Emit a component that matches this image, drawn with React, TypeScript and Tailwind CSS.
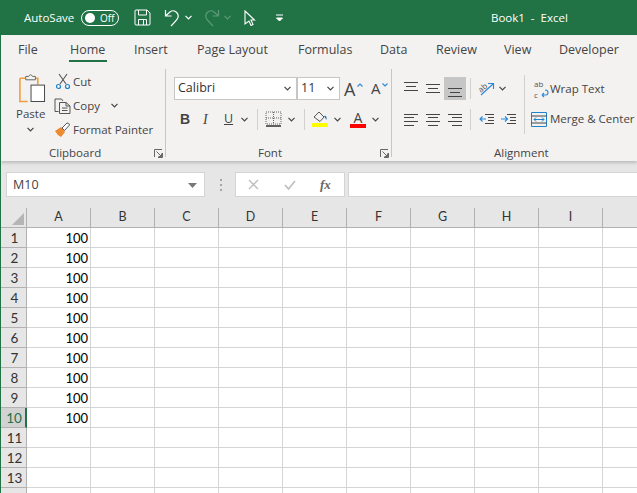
import { ReactNode } from 'react'

const UI_FONT = 'font-["Open_Sans","Liberation_Sans",sans-serif]'

const tabs = [
  { label: 'File', className: 'ml-[17px] w-[52px]' },
  { label: 'Home', className: 'w-[64px] text-[#222] font-medium' },
  { label: 'Insert', className: 'w-[63px]' },
  { label: 'Page Layout', className: 'w-[101px]' },
  { label: 'Formulas', className: 'w-[82px]' },
  { label: 'Data', className: 'w-[56px]' },
  { label: 'Review', className: 'w-[68px]' },
  { label: 'View', className: 'w-[55px]' },
  { label: 'Developer', className: 'w-[70px]' },
]

const columns = [
  { label: 'A', className: 'w-[64px]' },
  { label: 'B', className: 'w-[64px]' },
  { label: 'C', className: 'w-[64px]' },
  { label: 'D', className: 'w-[64px]' },
  { label: 'E', className: 'w-[64px]' },
  { label: 'F', className: 'w-[64px]' },
  { label: 'G', className: 'w-[64px]' },
  { label: 'H', className: 'w-[64px]' },
  { label: 'I', className: 'w-[64px]' },
  { label: '', className: 'w-[35px]' },
]

const rows = [1, 2, 3, 4, 5, 6, 7, 8, 9, 10, 11, 12, 13, 14]

function Chevron({ className = '', color = '#444' }: { className?: string; color?: string }) {
  return (
    <svg width="7" height="5" viewBox="0 0 7 5" className={`shrink-0 ${className}`}>
      <path d="M0.5 0.8 L3.5 3.8 L6.5 0.8" fill="none" stroke={color} strokeWidth="1.2" />
    </svg>
  )
}

function Launcher() {
  return (
    <svg width="9" height="9" viewBox="0 0 9 9" className="shrink-0">
      <path d="M0.5 8 V0.5 H8 M8.5 4 V8.5 H4 M2.5 2.5 L7.5 7.5 M7.5 4.5 V7.5 H4.5" fill="none" stroke="#666" strokeWidth="1" />
    </svg>
  )
}

// horizontal text-alignment style icon, each line is [x1, x2, y]
function Lines({ lines, color = '#444' }: { lines: number[][]; color?: string }) {
  return (
    <svg width="15" height="14" viewBox="0 0 15 14" className="shrink-0 overflow-visible">
      {lines.map(([a, b, y], i) => (
        <path key={i} d={`M${a} ${y + 0.5} H${b}`} stroke={color} strokeWidth="1" />
      ))}
    </svg>
  )
}

function Sep({ className = '' }: { className?: string }) {
  return <div className={`w-px bg-[#d2d0ce] shrink-0 ${className}`} />
}

function Group({ label, className, labelClass, launcher, children }: { label: string; className: string; labelClass: string; launcher?: boolean; children: ReactNode }) {
  return (
    <div className={`relative h-[88px] border-r border-[#c8c6c4] shrink-0 ${className}`}>
      {children}
      <div className={`absolute top-[76px] text-[11.5px] leading-[16px] text-[#444] ${labelClass}`}>{label}</div>
      {launcher && (
        <div className="absolute top-[80px] right-[2px]">
          <Launcher />
        </div>
      )}
    </div>
  )
}

function TitleBar() {
  return (
    <div className="h-[35px] bg-[#217346] flex items-center text-white shrink-0">
      <span className="ml-[23px] w-[57px] text-[11.5px]">AutoSave</span>
      <div className="w-[38px] h-[16px] rounded-full border border-white flex items-center pl-[3px]">
        <span className="w-[10px] h-[10px] rounded-full bg-white" />
        <span className="ml-[5px] text-[10px] leading-none">Off</span>
      </div>
      <svg width="17" height="17" viewBox="0 0 17 17" className="ml-[15px]">
        <path d="M1 2 Q1 1 2 1 H13 L16 4 V15 Q16 16 15 16 H2 Q1 16 1 15 Z M4.5 1 V6 H12.5 V1 M4.5 16 V10.5 H12.5 V16 M9.5 11 V16" fill="none" stroke="#fff" strokeWidth="1" />
      </svg>
      <svg width="16" height="18" viewBox="0 0 16 18" className="ml-[13px]">
        <path d="M1.5 1 V7 H7.5 M1.5 7 L6.5 2.5 Q9 1 11.5 2.5 Q15 5 14 8.5 Q13 11 7 17" fill="none" stroke="#fff" strokeWidth="1.2" />
      </svg>
      <Chevron color="#fff" className="ml-[5px]" />
      <svg width="16" height="18" viewBox="0 0 16 18" className="ml-[12px]">
        <path d="M14.5 1 V7 H8.5 M14.5 7 L9.5 2.5 Q7 1 4.5 2.5 Q1 5 2 8.5 Q3 11 9 17" fill="none" stroke="#5b9b7a" strokeWidth="1.2" />
      </svg>
      <Chevron color="#5b9b7a" className="ml-[4px]" />
      <svg width="12" height="16" viewBox="0 0 12 16" className="ml-[13px]">
        <path d="M1 1 L10.5 10 H7 L9 14.5 L7 15.5 L5 11 L1 14 Z" fill="none" stroke="#fff" strokeWidth="1.1" />
      </svg>
      <svg width="9" height="8" viewBox="0 0 9 8" className="ml-[19px]">
        <path d="M1 1 H8 M1.5 4 L4.5 7 L7.5 4 Z" fill="#fff" stroke="#fff" strokeWidth="1" />
      </svg>
      <span className="ml-[207px] text-[11.5px] whitespace-pre">Book1  -  Excel</span>
    </div>
  )
}

function TabStrip() {
  return (
    <div className="h-[30px] flex items-center shrink-0">
      {tabs.map((t) => (
        <div key={t.label} className={`relative h-full flex items-center shrink-0 pt-[1px] text-[12.5px] text-[#444] ${t.className}`}>
          {t.label}
          {t.label === 'Home' && <div className="absolute left-[-1px] top-[25px] w-[38px] h-[2px] bg-[#217346]" />}
        </div>
      ))}
    </div>
  )
}

function Clipboard() {
  return (
    <Group label="Clipboard" className="w-[165px]" labelClass="left-[48px]" launcher>
      <div className="flex">
        <div className="w-[52px] pl-[17px] pt-[4px] flex flex-col">
          <svg width="28" height="30" viewBox="0 0 29 31">
            <path d="M2 5.5 H8 M18 5.5 H20.5 V12 M10 29.5 H2 V5.5" fill="none" stroke="#ed9c3f" strokeWidth="1.6" />
            <path d="M8 6 V3.5 H11 Q13 0 15 3.5 H18 V7 H8 Z" fill="#f3f2f1" stroke="#666" strokeWidth="1" />
            <rect x="13.5" y="12.5" width="14" height="17" fill="#fff" stroke="#444" strokeWidth="1" />
          </svg>
          <span className="mt-[2px] -ml-[2px] text-[11.5px] leading-[17px] text-[#444]">Paste</span>
          <Chevron className="mt-[5px] ml-[9px]" />
        </div>
        <div className="flex flex-col pt-[4px] text-[11.5px] text-[#444]">
          <div className="h-[17px] flex items-center">
            <svg width="16" height="17" viewBox="0 0 16 17" className="ml-[2px]">
              <path d="M4 1 L11 11 M12 1 L5 11" fill="none" stroke="#555" strokeWidth="1.1" />
              <circle cx="3.5" cy="13.5" r="2" fill="none" stroke="#1e83c9" strokeWidth="1.2" />
              <circle cx="12.5" cy="13.5" r="2" fill="none" stroke="#1e83c9" strokeWidth="1.2" />
            </svg>
            <span className="ml-[2px]">Cut</span>
          </div>
          <div className="h-[17px] mt-[7px] flex items-center">
            <svg width="17" height="16" viewBox="0 0 17 16" className="ml-[1px]">
              <path d="M4.5 13.5 H1 V1 H7.5 L9 3" fill="none" stroke="#555" strokeWidth="1" />
              <path d="M5.5 4.5 H12 L16 8 V15.5 H5.5 Z M12 4.5 V8 H16 M8 10 H13.5 M8 12.5 H13.5" fill="none" stroke="#555" strokeWidth="1" />
            </svg>
            <span className="ml-[2px]">Copy</span>
            <Chevron className="ml-[11px]" />
          </div>
          <div className="h-[17px] mt-[7px] flex items-center whitespace-nowrap">
            <svg width="17" height="16" viewBox="0 0 17 16" className="ml-[1px]">
              <path d="M1 9 L7 5 L11 10 L7 15 Q3 13 1 9 Z" fill="#ed8a2e" />
              <path d="M8 6 L13 1 Q15 0.5 15.5 3 L10.5 8.5 Z" fill="#fff" stroke="#555" strokeWidth="1" />
            </svg>
            <span className="ml-[2px]">Format Painter</span>
          </div>
        </div>
      </div>
    </Group>
  )
}

function Font() {
  return (
    <Group label="Font" className="w-[226px]" labelClass="left-[92px]" launcher>
      <div className="flex items-center pt-[8px] pl-[8px]">
        <div className="w-[123px] h-[23px] bg-white border border-[#c8c6c4] flex items-center justify-between pl-[3px] pr-[5px] text-[12.5px] text-[#333]">
          Calibri
          <Chevron />
        </div>
        <div className="w-[43px] h-[23px] bg-white border border-[#c8c6c4] flex items-center justify-between pl-[3px] pr-[5px] text-[12.5px] text-[#333]">
          11
          <Chevron />
        </div>
        <span className="ml-[4px] w-[11px] text-[18px] leading-none text-[#444]">A</span>
        <svg width="6" height="4" viewBox="0 0 6 4" className="ml-[2px] mb-[8px]">
          <path d="M0.5 3.5 L3 1 L5.5 3.5" fill="none" stroke="#2b88d8" strokeWidth="1.1" />
        </svg>
        <span className="ml-[8px] w-[10px] text-[15px] leading-none text-[#444]">A</span>
        <svg width="6" height="4" viewBox="0 0 6 4" className="ml-[1px] mb-[8px]">
          <path d="M0.5 0.5 L3 3 L5.5 0.5" fill="none" stroke="#2b88d8" strokeWidth="1.1" />
        </svg>
      </div>
      <div className="flex items-center mt-[8px] h-[22px] text-[#444]">
        <span className="ml-[14px] w-[21px] text-[14px] font-bold" style={{ fontFamily: 'Liberation Sans' }}>B</span>
        <span className="ml-[2px] w-[21px] text-[14px] italic" style={{ fontFamily: 'Liberation Serif' }}>I</span>
        <span className="w-[13px] text-[12.5px] underline">U</span>
        <Chevron className="ml-[4px]" />
        <Sep className="h-[21px] ml-[9px]" />
        <svg width="17" height="16" viewBox="0 0 17 16" className="ml-[7px]">
          <path d="M1 1 H16 V13 H1 Z M8.5 1 V13 M1 7 H16" fill="none" stroke="#666" strokeWidth="1" strokeDasharray="1 1" />
          <path d="M1 15 H16" stroke="#222" strokeWidth="1.4" />
        </svg>
        <Chevron className="ml-[6px]" />
        <Sep className="h-[21px] ml-[9px]" />
        <div className="ml-[7px] w-[16px] flex flex-col items-center">
          <svg width="15" height="12" viewBox="0 0 15 12">
            <path d="M1 6 L6 1 L11 6 L7 10.5 Z" fill="none" stroke="#555" strokeWidth="1" />
            <path d="M11 5 Q14 4 13.5 9 Z" fill="#1e6fb8" />
          </svg>
          <div className="w-[16px] h-[4px] bg-[#ffff00]" />
        </div>
        <Chevron className="ml-[6px]" />
        <div className="ml-[9px] w-[16px] flex flex-col items-center">
          <span className="h-[13px] text-[14px] leading-[13px]">A</span>
          <div className="w-[16px] h-[4px] bg-[#ff0000]" />
        </div>
        <Chevron className="ml-[6px]" />
      </div>
    </Group>
  )
}

const ALIGN_L = [[0, 14, 2], [0, 10, 5], [0, 14, 9], [0, 10, 13]]
const ALIGN_C = [[0, 14, 2], [2, 12, 5], [0, 14, 9], [2, 12, 13]]
const ALIGN_R = [[0, 14, 2], [4, 14, 5], [0, 14, 9], [4, 14, 13]]

function Alignment() {
  return (
    <Group label="Alignment" className="w-[245px] border-r-0" labelClass="left-[102px]">
      <div className="flex items-center pt-[8px] h-[31px]">
        <div className="ml-[12px] w-[22px]"><Lines lines={[[0, 14, 0], [2, 12, 4], [0, 14, 8]]} /></div>
        <div className="w-[18px]"><Lines lines={[[0, 14, 2], [2, 12, 6], [0, 14, 10]]} /></div>
        <div className="w-[22px] h-[23px] bg-[#c6c6c6] flex items-center justify-center">
          <Lines lines={[[0, 14, 6], [2, 12, 10], [0, 14, 14]]} />
        </div>
        <Sep className="h-[21px] ml-[4px]" />
        <svg width="18" height="16" viewBox="0 0 18 16" className="ml-[7px] overflow-visible">
          <text x="1" y="9" fontSize="8" fill="#555" transform="rotate(-40 6 8)" fontFamily="Open Sans">ab</text>
          <path d="M3 14 L15 3 M10 2.5 H15.5 V8" fill="none" stroke="#2b88d8" strokeWidth="1.1" />
        </svg>
        <Chevron className="ml-[3px]" />
        <Sep className="h-[59px] ml-[18px] mt-[16px] mb-[-16px]" />
        <svg width="16" height="18" viewBox="0 0 16 18" className="ml-[8px] overflow-visible">
          <text x="1" y="7" fontSize="8" fill="#555" fontFamily="Open Sans">ab</text>
          <text x="1" y="18" fontSize="8" fill="#555" fontFamily="Open Sans">c</text>
          <path d="M9 15 H13 Q15 15 15 12.5 Q15 10 12 10 M9 15 L11 13 M9 15 L11 17" fill="none" stroke="#2b88d8" strokeWidth="1.1" />
        </svg>
        <span className="ml-[1px] text-[11.5px] text-[#444] whitespace-nowrap">Wrap Text</span>
      </div>
      <div className="flex items-center mt-[8px] h-[22px]">
        <div className="ml-[12px] w-[22px]"><Lines lines={ALIGN_L} /></div>
        <div className="w-[22px]"><Lines lines={ALIGN_C} /></div>
        <div className="w-[18px]"><Lines lines={ALIGN_R} /></div>
        <Sep className="h-[21px] ml-[4px]" />
        <svg width="15" height="14" viewBox="0 0 15 14" className="ml-[8px]">
          <path d="M6 2.5 H15 M9 5.5 H15 M9 8.5 H15 M6 11.5 H15" stroke="#444" />
          <path d="M7 7 H1 M3.5 4.5 L1 7 L3.5 9.5" fill="none" stroke="#2b88d8" strokeWidth="1.1" />
        </svg>
        <svg width="15" height="14" viewBox="0 0 15 14" className="ml-[7px]">
          <path d="M6 2.5 H15 M9 5.5 H15 M9 8.5 H15 M6 11.5 H15" stroke="#444" />
          <path d="M0 7 H6.5 M4 4.5 L6.5 7 L4 9.5" fill="none" stroke="#2b88d8" strokeWidth="1.1" />
        </svg>
        <svg width="16" height="15" viewBox="0 0 16 15" className="ml-[15px]">
          <path d="M0.5 0.5 H15.5 V14.5 H0.5 Z" fill="none" stroke="#1e83c9" />
          <path d="M0.5 4 H15.5 M0.5 11 H15.5" stroke="#444" />
          <path d="M3 7.5 H13 M5 5.5 L3 7.5 L5 9.5 M11 5.5 L13 7.5 L11 9.5" fill="none" stroke="#1e83c9" />
        </svg>
        <span className="ml-[3px] text-[11.5px] text-[#444] whitespace-nowrap">Merge &amp; Center</span>
      </div>
    </Group>
  )
}

function Ribbon() {
  return (
    <div className="h-[96px] flex pt-[4px] shrink-0 overflow-hidden">
      <Clipboard />
      <Font />
      <Alignment />
    </div>
  )
}

function FormulaBar() {
  return (
    <div className="h-[47px] flex items-start pt-[11px] shrink-0">
      <div className="ml-[5px] w-[199px] h-[25px] bg-white border border-[#d4d4d4] flex items-center justify-between pl-[6px] pr-[7px] pt-[1px] text-[12.5px] text-[#444]">
        M10
        <svg width="9" height="5" viewBox="0 0 9 5"><path d="M0 0 H9 L4.5 5 Z" fill="#777" /></svg>
      </div>
      <div className="ml-[15px] w-[2px] h-[12px] mt-[7px] flex flex-col justify-between">
        <span className="h-[2px] bg-[#a6a6a6]" />
        <span className="h-[2px] bg-[#a6a6a6]" />
        <span className="h-[2px] bg-[#a6a6a6]" />
      </div>
      <div className="ml-[13px] w-[110px] h-[25px] bg-white border border-[#d4d4d4] flex items-center pl-[12px]">
        <svg width="11" height="11" viewBox="0 0 11 11"><path d="M1 1 L10 10 M10 1 L1 10" stroke="#bdbdbd" strokeWidth="1.4" /></svg>
        <svg width="12" height="10" viewBox="0 0 12 10" className="ml-[25px]"><path d="M1 5 L4.5 9 L11 1" fill="none" stroke="#bdbdbd" strokeWidth="1.6" /></svg>
        <span className="ml-[24px] text-[13px] italic font-bold text-[#666]" style={{ fontFamily: 'Liberation Serif' }}>fx</span>
      </div>
      <div className="ml-[3px] flex-1 h-[25px] bg-white border border-[#d4d4d4] border-r-0" />
    </div>
  )
}

function Sheet() {
  return (
    <div className="flex-1 overflow-hidden bg-white">
      <div className="flex h-[20px] bg-[#e6e6e6]">
        <div className="w-[26px] shrink-0 border-r border-b border-[#b1b1b1] flex items-end justify-end pr-[2px] pb-[2px]">
          <svg width="12" height="12" viewBox="0 0 12 12"><path d="M12 0 V12 H0 Z" fill="#b5b5b5" /></svg>
        </div>
        {columns.map((c) => (
          <div key={c.label} className={`shrink-0 border-r border-b border-[#b1b1b1] flex items-center justify-center text-[12.5px] text-[#333] ${c.className}`} style={{ fontFamily: 'Lato' }}>
            {c.label}
          </div>
        ))}
      </div>
      {rows.map((r) => (
        <div key={r} className="flex h-[20px]">
          <div
            className={`w-[26px] shrink-0 border-b flex items-center justify-center pl-[2px] pt-[2px] text-[13.5px] leading-none ${
              r === 10 ? 'bg-[#d2d2d2] border-[#b1b1b1] border-r-2 border-r-[#217346] text-[#217346]' : 'bg-[#e6e6e6] border-[#b1b1b1] border-r border-r-[#b1b1b1] text-[#333]'
            }`}
            style={{ fontFamily: 'Lato' }}
          >
            {r < 14 ? r : ''}
          </div>
          {columns.map((c, i) => (
            <div key={c.label} className={`shrink-0 border-r border-b border-[#d4d4d4] flex items-center justify-end pr-[2px] pt-[2px] text-[13px] text-black ${c.className}`} style={{ fontFamily: 'Lato' }}>
              {i === 0 && r <= 10 ? '100' : ''}
            </div>
          ))}
        </div>
      ))}
    </div>
  )
}

export default function App() {
  return (
    <div className={`w-[637px] h-[493px] flex flex-col overflow-hidden border-l border-[#217346] bg-[#e6e6e6] ${UI_FONT}`}>
      <TitleBar />
      <div className="bg-[#f3f2f1] shrink-0 shadow-[0_2px_3px_rgba(0,0,0,0.18)] relative">
        <TabStrip />
        <Ribbon />
      </div>
      <FormulaBar />
      <Sheet />
    </div>
  )
}
